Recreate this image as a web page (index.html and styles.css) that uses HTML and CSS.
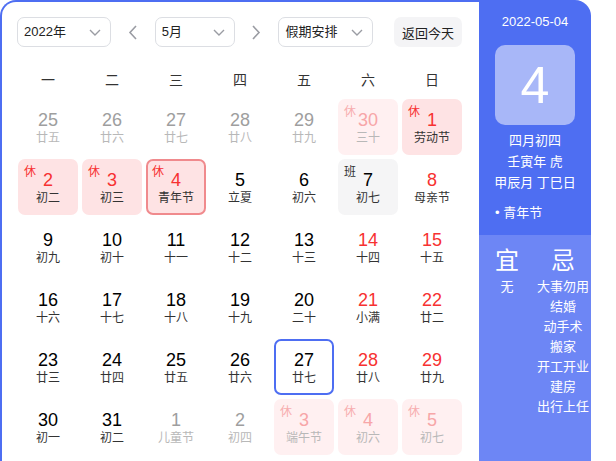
FILE: index.html
```html
<!DOCTYPE html>
<html lang="zh-CN">
<head>
<meta charset="utf-8">
<title>万年历</title>
<link rel="stylesheet" href="styles.css">
</head>
<body>
<div class="widget">
  <div class="main">
    <div class="toolbar">
      <div class="select year"><span>2022年</span><svg class="chev" width="12" height="7" viewBox="0 0 12 7"><polyline points="1,1 6,6 11,1"/></svg></div>
      <div class="arrow"><svg width="9" height="15" viewBox="0 0 9 15"><polyline points="8,1 2,7.5 8,14"/></svg></div>
      <div class="select month"><span>5月</span><svg class="chev" width="12" height="7" viewBox="0 0 12 7"><polyline points="1,1 6,6 11,1"/></svg></div>
      <div class="arrow"><svg width="9" height="15" viewBox="0 0 9 15"><polyline points="1,1 7,7.5 1,14"/></svg></div>
      <div class="select holiday-sel"><span>假期安排</span><svg class="chev" width="12" height="7" viewBox="0 0 12 7"><polyline points="1,1 6,6 11,1"/></svg></div>
      <div class="today-btn">返回今天</div>
    </div>
    <div class="weekdays">
      <div>一</div><div>二</div><div>三</div><div>四</div><div>五</div><div>六</div><div>日</div>
    </div>
    <div class="grid">
      <div class="cell other"><span class="num">25</span><span class="lunar">廿五</span></div>
      <div class="cell other"><span class="num">26</span><span class="lunar">廿六</span></div>
      <div class="cell other"><span class="num">27</span><span class="lunar">廿七</span></div>
      <div class="cell other"><span class="num">28</span><span class="lunar">廿八</span></div>
      <div class="cell other"><span class="num">29</span><span class="lunar">廿九</span></div>
      <div class="cell other rest"><span class="tag">休</span><span class="num">30</span><span class="lunar">三十</span></div>
      <div class="cell rest"><span class="tag">休</span><span class="num">1</span><span class="lunar">劳动节</span></div>

      <div class="cell rest"><span class="tag">休</span><span class="num">2</span><span class="lunar">初二</span></div>
      <div class="cell rest"><span class="tag">休</span><span class="num">3</span><span class="lunar">初三</span></div>
      <div class="cell rest today"><span class="tag">休</span><span class="num">4</span><span class="lunar">青年节</span></div>
      <div class="cell"><span class="num">5</span><span class="lunar">立夏</span></div>
      <div class="cell"><span class="num">6</span><span class="lunar">初六</span></div>
      <div class="cell work"><span class="tag">班</span><span class="num">7</span><span class="lunar">初七</span></div>
      <div class="cell weekend"><span class="num">8</span><span class="lunar">母亲节</span></div>

      <div class="cell"><span class="num">9</span><span class="lunar">初九</span></div>
      <div class="cell"><span class="num">10</span><span class="lunar">初十</span></div>
      <div class="cell"><span class="num">11</span><span class="lunar">十一</span></div>
      <div class="cell"><span class="num">12</span><span class="lunar">十二</span></div>
      <div class="cell"><span class="num">13</span><span class="lunar">十三</span></div>
      <div class="cell weekend"><span class="num">14</span><span class="lunar">十四</span></div>
      <div class="cell weekend"><span class="num">15</span><span class="lunar">十五</span></div>

      <div class="cell"><span class="num">16</span><span class="lunar">十六</span></div>
      <div class="cell"><span class="num">17</span><span class="lunar">十七</span></div>
      <div class="cell"><span class="num">18</span><span class="lunar">十八</span></div>
      <div class="cell"><span class="num">19</span><span class="lunar">十九</span></div>
      <div class="cell"><span class="num">20</span><span class="lunar">二十</span></div>
      <div class="cell weekend"><span class="num">21</span><span class="lunar">小满</span></div>
      <div class="cell weekend"><span class="num">22</span><span class="lunar">廿二</span></div>

      <div class="cell"><span class="num">23</span><span class="lunar">廿三</span></div>
      <div class="cell"><span class="num">24</span><span class="lunar">廿四</span></div>
      <div class="cell"><span class="num">25</span><span class="lunar">廿五</span></div>
      <div class="cell"><span class="num">26</span><span class="lunar">廿六</span></div>
      <div class="cell selected"><span class="num">27</span><span class="lunar">廿七</span></div>
      <div class="cell weekend"><span class="num">28</span><span class="lunar">廿八</span></div>
      <div class="cell weekend"><span class="num">29</span><span class="lunar">廿九</span></div>

      <div class="cell"><span class="num">30</span><span class="lunar">初一</span></div>
      <div class="cell"><span class="num">31</span><span class="lunar">初二</span></div>
      <div class="cell other"><span class="num">1</span><span class="lunar">儿童节</span></div>
      <div class="cell other"><span class="num">2</span><span class="lunar">初四</span></div>
      <div class="cell other rest"><span class="tag">休</span><span class="num">3</span><span class="lunar">端午节</span></div>
      <div class="cell other rest"><span class="tag">休</span><span class="num">4</span><span class="lunar">初六</span></div>
      <div class="cell other rest"><span class="tag">休</span><span class="num">5</span><span class="lunar">初七</span></div>
    </div>
  </div>
  <div class="side">
    <div class="side-top">
      <div class="side-date">2022-05-04</div>
      <div class="big-day">4</div>
      <div class="lunar-info">
        <div>四月初四</div>
        <div>壬寅年 虎</div>
        <div>甲辰月 丁巳日</div>
      </div>
      <div class="festival">• 青年节</div>
    </div>
    <div class="side-bottom">
      <div class="yiji">
        <div class="col">
          <div class="yj-title">宜</div>
          <div class="yj-item">无</div>
        </div>
        <div class="col">
          <div class="yj-title">忌</div>
          <div class="yj-item">大事勿用</div>
          <div class="yj-item">结婚</div>
          <div class="yj-item">动手术</div>
          <div class="yj-item">搬家</div>
          <div class="yj-item">开工开业</div>
          <div class="yj-item">建房</div>
          <div class="yj-item">出行上任</div>
        </div>
      </div>
    </div>
  </div>
</div>
</body>
</html>
```

FILE: styles.css
```css
html, body {
  margin: 0;
  padding: 0;
  overflow: hidden;
  background: #fff;
}
body {
  font-family: "Liberation Sans", "Noto Sans CJK SC", sans-serif;
  color: #222;
}
.widget {
  display: flex;
  width: 591px;
  height: 470px;
}
.main {
  border-left: 2px solid #4e6ef2;
  border-top: 2px solid #4e6ef2;
  border-top-left-radius: 16px;
  background: #fff;
  padding: 15px 17px 0 15px;
  box-sizing: border-box;
  width: 479px;
}
.toolbar {
  display: flex;
  align-items: center;
  height: 30px;
}
.select {
  height: 30px;
  box-sizing: border-box;
  border: 1px solid #dcdee3;
  border-radius: 7px;
  display: flex;
  align-items: center;
  justify-content: space-between;
  padding: 0 9px 0 6px;
  font-size: 13px;
  color: #222;
}
.select span { line-height: 18px; }
.year { width: 94px; }
.month { width: 80px; }
.holiday-sel { width: 95px; }
.chev polyline {
  fill: none;
  stroke: #9a9ca3;
  stroke-width: 1.4;
}
.arrow {
  width: 44px;
  display: flex;
  justify-content: center;
  align-items: center;
}
.arrow polyline {
  fill: none;
  stroke: #9a9ca3;
  stroke-width: 1.6;
}
.today-btn {
  margin-left: 21px;
  width: 68px;
  height: 30px;
  border-radius: 7px;
  background: #f4f4f6;
  font-size: 13px;
  display: flex;
  align-items: center;
  justify-content: center;
  color: #222;
}
.weekdays {
  display: grid;
  grid-template-columns: repeat(7, 60px);
  column-gap: 4px;
  margin: 21px 0 0 1px;
  height: 24px;
  line-height: 24px;
  font-size: 14px;
  text-align: center;
  color: #333;
}
.grid {
  display: grid;
  grid-template-columns: repeat(7, 60px);
  grid-auto-rows: 56px;
  gap: 4px;
  margin: 7px 0 0 1px;
}
.cell {
  position: relative;
  box-sizing: border-box;
  border: 2px solid transparent;
  border-radius: 7px;
  display: flex;
  flex-direction: column;
  align-items: center;
  padding-top: 9px;
}
.num {
  font-size: 18px;
  line-height: 20px;
  color: #000;
}
.lunar {
  font-size: 12px;
  line-height: 16px;
  color: #333;
}
.tag {
  position: absolute;
  top: 3px;
  left: 4px;
  font-size: 12px;
  line-height: 16px;
  color: #f73131;
}
.weekend .num { color: #f73131; }
.other .num { color: #9e9e9e; }
.other .lunar { color: #b8b8b8; }
.rest { background: #fee3e4; }
.rest .num { color: #f73131; }
.other.rest { background: #fff0f1; }
.other.rest .num { color: #f7a6a8; }
.other.rest .tag { color: #f7adaf; }
.work { background: #f5f5f6; }
.work .tag { color: #333; }
.today { border-color: #f08a8d; }
.selected { border-color: #4e6ef2; }

.side {
  width: 112px;
  display: flex;
  flex-direction: column;
  border-top-right-radius: 16px;
  overflow: hidden;
  color: #fff;
}
.side-top {
  background: #4e6ef2;
  height: 235px;
  box-sizing: border-box;
  padding-top: 12px;
  display: flex;
  flex-direction: column;
  align-items: center;
}
.side-date {
  font-size: 13px;
  line-height: 20px;
}
.big-day {
  margin-top: 13px;
  width: 80px;
  height: 80px;
  border-radius: 10px;
  background: #a8b7f8;
  font-size: 52px;
  line-height: 80px;
  text-align: center;
}
.lunar-info {
  margin-top: 5px;
  font-size: 13px;
  line-height: 21px;
  text-align: center;
}
.festival {
  margin-top: 10px;
  align-self: flex-start;
  padding-left: 16px;
  font-size: 13px;
  line-height: 20px;
}
.side-bottom {
  flex: 1;
  background: #6d86f5;
  padding-top: 11px;
}
.yiji {
  display: flex;
}
.col {
  width: 56px;
  display: flex;
  flex-direction: column;
  align-items: center;
}
.yj-title {
  font-size: 24px;
  line-height: 30px;
  margin-bottom: 1px;
}
.yj-item {
  font-size: 13px;
  line-height: 20px;
}
```
